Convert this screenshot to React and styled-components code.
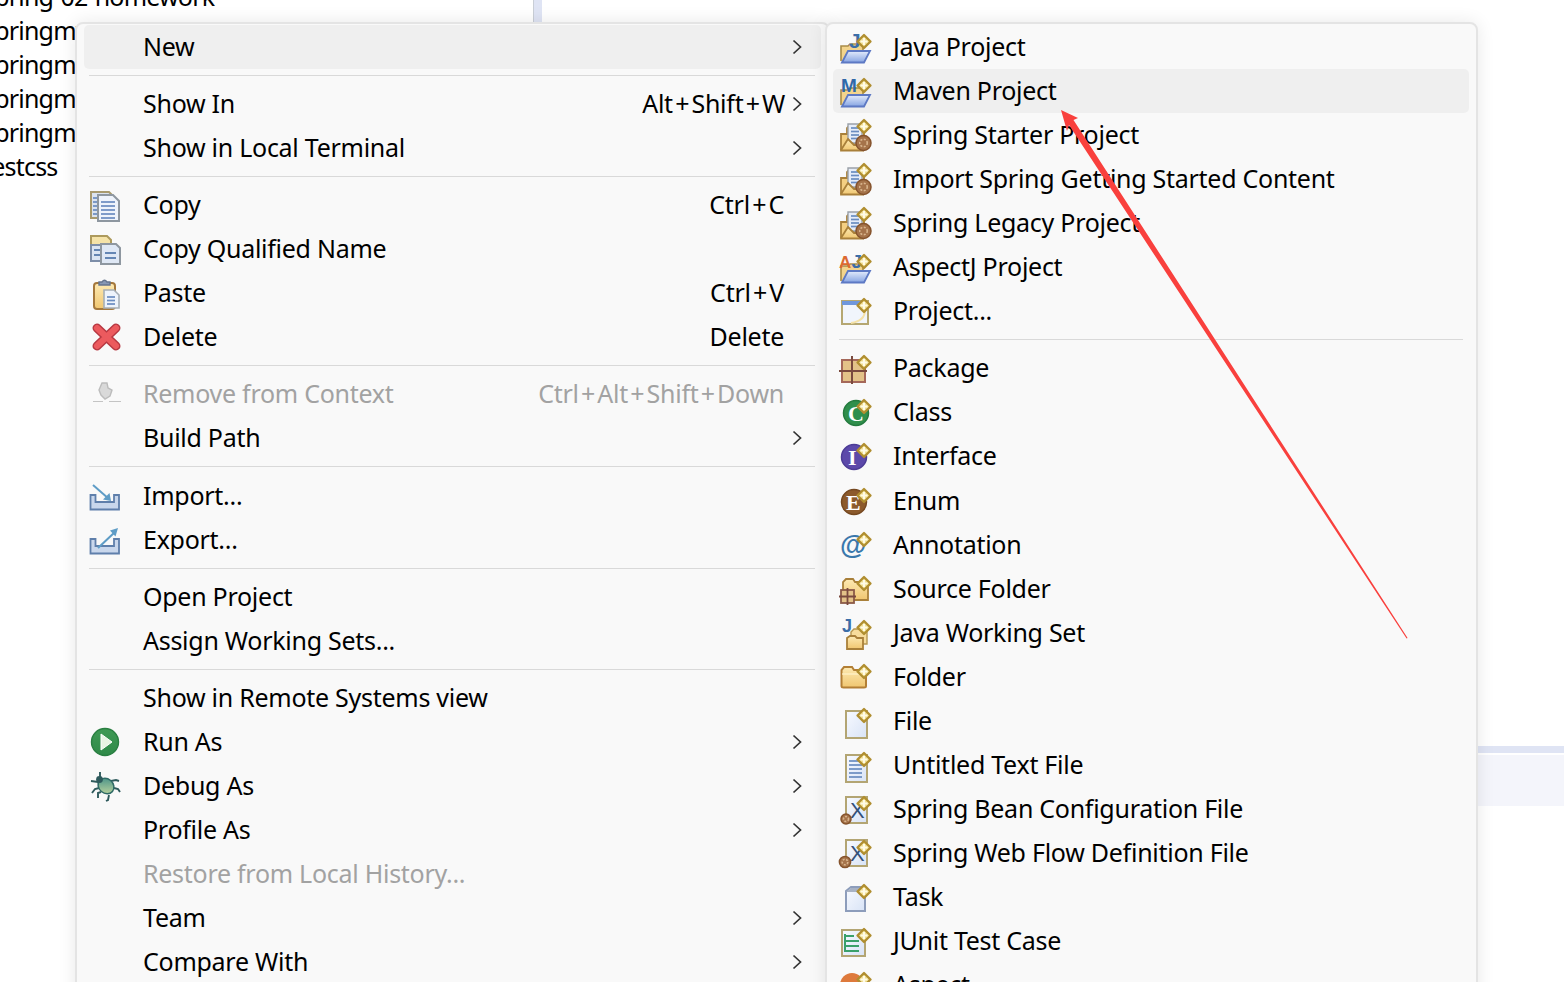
import React from 'react';
import styled, { createGlobalStyle } from 'styled-components';

const Global = createGlobalStyle`
  html, body { margin: 0; padding: 0; background: #fff; }
  #root { width: 1564px; height: 982px; overflow: hidden; }
`;

const Page = styled.div`
  position: relative;
  display: flex;
  width: 1564px;
  height: 982px;
  overflow: hidden;
  background: #fff;
  font-family: "Noto Sans", "Open Sans", sans-serif;
  color: #000;
`;
const TreePane = styled.div`
  width: 533px;
  flex: none;
  border-right: 1px solid #c9ced6;
  overflow: hidden;
  margin-top: -21px;
  height: 1003px;
`;
const TreeRow = styled.div`
  height: 34px;
  line-height: 34px;
  font-size: 25px;
  letter-spacing: -0.8px;
  margin-left: -17px;
  white-space: nowrap;
`;
const Sash = styled.div`
  width: 8px;
  flex: none;
  background: #dfe4f4;
`;
const Editor = styled.div`
  flex: 1;
  padding-top: 746px;
  display: flex;
  flex-direction: column;
  gap: 2px;
`;
const BandStrong = styled.div`height: 7px; background: #dfe4f4;`;
const BandSoft = styled.div`height: 51px; background: #f4f5fb;`;

const Row = styled.div`
  display: flex;
  align-items: center;
  height: 44px;
  margin-bottom: ${p => (p.$tall ? '1px' : '0')};
  border-radius: 5px;
  background: ${p => (p.$active ? '#efefef' : 'transparent')};
  color: ${p => (p.$disabled ? '#a2a2a2' : '#000')};
  font-size: 25px;
  letter-spacing: -0.27px;
  white-space: nowrap;
`;
const IconSlot = styled.span`
  width: 32px;
  height: 32px;
  flex: none;
  margin-left: 6px;
  margin-right: 22px;
  svg { display: block; }
`;
const Label = styled.span`
  flex: 1;
  padding-bottom: 2px;
`;
const Shortcut = styled.span`
  padding-bottom: 2px;
  margin-right: ${p => (p.$arrow ? '6px' : '37px')};
`;
const Plus = styled.span`
  margin: 0 2.3px;
`;
const ChevronSlot = styled.span`
  width: 12px;
  margin-right: 18px;
  display: flex;
  justify-content: center;
  svg { display: block; }
`;
const Separator = styled.div`
  height: 1px;
  margin: ${p => (p.$loose ? '6px 6px 7px' : '6px 6px 6px')};
  background: #d9d9d9;
`;
const Menu = styled.div`
  position: absolute;
  top: 22px;
  height: 1000px;
  box-sizing: border-box;
  background: #f9f9f9;
  border: 2px solid #e4e4e4;
  border-radius: 8px;
  padding-top: 1px;
  box-shadow: 0 0 18px rgba(0, 0, 0, 0.09);
`;
const MainMenu = styled(Menu)`
  left: 75px;
  width: 755px;
  padding-left: 7px;
  padding-right: 7px;
  ${IconSlot} { margin-left: 5px; }
  ${Separator} { margin-left: 5px; }
`;
const SubMenu = styled(Menu)`
  left: 825px;
  width: 653px;
  padding-left: 6px;
  padding-right: 7px;
`;
const ArrowLayer = styled.svg`
  position: absolute;
  left: 0;
  top: 0;
  pointer-events: none;
`;
const Defs = styled.svg`
  position: absolute;
  width: 0;
  height: 0;
`;

const Chevron = () => (
  <svg width="12" height="18" viewBox="0 0 12 18">
    <path d="M2.5 2.5 L9.5 9 L2.5 15.5" fill="none" stroke="#333" strokeWidth="1.7" />
  </svg>
);

const Star = ({ dy = 0 }) => (
  <g transform={`translate(0 ${dy})`}>
    <path d="M25 4 L31.5 10.5 L25 17 L18.5 10.5 Z" fill="#efdc8c" stroke="#b08e30" strokeWidth="2.3" strokeLinejoin="round" />
    <path d="M25 7v7M21.5 10.5h7" stroke="#fffbe6" strokeWidth="2.2" />
  </g>
);
const BlueFolder = () => (
  <g>
    <path d="M2 30 V15 H9 L11 13 H24 V20" fill="#f3d48c" stroke="#a98c48" strokeWidth="1.6" />
    <path d="M3 31.5 L9 20 H31 L25 31.5 Z" fill="url(#gBlue)" stroke="#5d79c4" strokeWidth="1.8" />
  </g>
);
const Glyph = ({ x, y, size, fill, children, weight = 700, family = '"Liberation Serif", serif' }) => (
  <text x={x} y={y} fontSize={size} fill={fill} fontWeight={weight} fontFamily={family} letterSpacing="0">{children}</text>
);
const Page1 = ({ x = 7, y = 6, w = 21, h = 27 }) => (
  <path d={`M${x} ${y} H${x + w} V${y + h} H${x} Z`} fill="url(#gPage)" stroke="#b3a573" strokeWidth="2" />
);
const Lines = ({ x, y, w, n, gap = 4, color = '#6a8cc0' }) => (
  <g stroke={color} strokeWidth="1.7">
    {Array.from({ length: n }, (_, i) => <path key={i} d={`M${x} ${y + i * gap}h${w}`} />)}
  </g>
);
const Nut = ({ cx = 25, cy = 26, r = 6.5 }) => (
  <g>
    <circle cx={cx} cy={cy} r={r} fill="#a5734a" stroke="#85532c" strokeWidth="1.5" />
    <circle cx={cx} cy={cy} r={r / 2} fill="none" stroke="#d8b48c" strokeWidth="1.6" strokeDasharray="2 1.5" />
  </g>
);
const SpringIcon = () => (
  <g>
    <path d="M2 31 V15 H8 V9 L11 6 H25 V24 H14" fill="#f4cf82" stroke="#a9803a" strokeWidth="1.8" />
    <path d="M9 5 H23 V24 H9 Z" fill="#e6edf9" stroke="#9aa0a8" strokeWidth="1.4" />
    <Lines x={12} y={9} w={8} n={4} gap={3.5} />
    <path d="M2 31 L9 20 L15 26 H24 V31.5 H2 Z" fill="url(#gFolder)" stroke="#a9803a" strokeWidth="1.8" />
    <Nut cx={24.5} cy={24} r={7.5} />
    <Star dy={-3} />
  </g>
);
const Circle = ({ color, ring, letter, fs = 22, x = 8, cx = 15 }) => (
  <g>
    <circle cx={cx} cy="17" r="12.5" fill={color} stroke={ring} strokeWidth="1.5" />
    <Glyph x={x} y={25} size={fs} fill="#fff">{letter}</Glyph>
    <Star />
  </g>
);
const Tray = () => (
  <path d="M1.5 15 V29.5 H30 V15 H25 V22 H6.5 V15 Z" fill="#c9d7ec" stroke="#5f7fab" strokeWidth="1.8" />
);
const Grid = ({ x, y, s }) => (
  <g>
    <rect x={x} y={y} width={s} height={s} fill="#e3c288" stroke="#8b5a48" strokeWidth="1.8" />
    <path d={`M${x - 2} ${y + s / 2}H${x + s + 2}M${x + s / 2} ${y - 2}V${y + s + 2}`} stroke="#7a4a3e" strokeWidth="1.8" />
  </g>
);

const icons = {
  copy: (
    <g>
      <path d="M2 3 H20 L24 7 V29 H2 Z" fill="#dbe3ef" stroke="#a89a6e" strokeWidth="2" />
      <Lines x={4} y={9} w={4} n={5} />
      <path d="M9 6 H24 L30 12 V32 H9 Z" fill="#eef3fb" stroke="#8e97a0" strokeWidth="2" />
      <Lines x={12} y={13} w={14} n={5} />
    </g>
  ),
  copyq: (
    <g>
      <path d="M2 3 H18 L22 7 V19 H2 Z" fill="#f5e3a8" stroke="#ad9a5c" strokeWidth="2" />
      <path d="M2 12 H18 V28 H2 Z" fill="#dbe5f3" stroke="#7d8ea8" strokeWidth="2" />
      <Lines x={5} y={17} w={9} n={2} gap={5} color="#4f74a8" />
      <path d="M12 11 H27 L31 15 V31 H12 Z" fill="#dfe8f5" stroke="#8e97a0" strokeWidth="2" />
      <Lines x={16} y={20} w={11} n={2} gap={5} color="#4f74a8" />
    </g>
  ),
  paste: (
    <g>
      <rect x="5" y="6" width="21" height="26" rx="3" fill="url(#gFolder)" stroke="#a5783c" strokeWidth="2" />
      <path d="M10 8 V5 H13 Q15.5 1.5 18 5 H21 V8 Z" fill="#8697b4" stroke="#64748f" strokeWidth="1.4" />
      <path d="M15 13 H25 L30 18 V31 H15 Z" fill="#eef3fb" stroke="#a6aeb6" strokeWidth="1.6" />
      <Lines x={18} y={20} w={8} n={3} gap={3.5} />
    </g>
  ),
  del: (
    <g strokeLinecap="round" fill="none">
      <path d="M8 7 L27 25 M27 7 L8 25" stroke="#b73842" strokeWidth="9" />
      <path d="M8 7 L27 25 M27 7 L8 25" stroke="#ec5a5e" strokeWidth="6" />
    </g>
  ),
  remove: (
    <g>
      <path d="M13 5 H18 L19 10 L23 12 L21 18 L16 21 L12 17 L10 12 Z" fill="#d9d9d9" stroke="#bcbcbc" strokeWidth="1.4" />
      <path d="M4 23.5 H14 M20 23.5 H32" stroke="#c4c4c4" strokeWidth="1.2" />
    </g>
  ),
  imp: (
    <g>
      <Tray />
      <path d="M4 5 L20 19" stroke="#5e9cc6" strokeWidth="2" fill="none" />
      <path d="M22 21 L14 19.5 L20.5 13 Z" fill="#5e9cc6" />
    </g>
  ),
  exp: (
    <g>
      <Tray />
      <path d="M9 24 L26 8" stroke="#5e9cc6" strokeWidth="2" fill="none" />
      <path d="M29 4 L21 6.5 L26.5 12.5 Z" fill="#5e9cc6" />
    </g>
  ),
  run: (
    <g>
      <circle cx="16" cy="16" r="13.5" fill="url(#gGreen)" stroke="#2a7f42" strokeWidth="1.4" />
      <path d="M12 8 L23 16 L12 24 Z" fill="#e9f5e4" stroke="#fff" strokeWidth="1" />
    </g>
  ),
  bug: (
    <g>
      <g stroke="#2e5a5c" strokeWidth="1.9" fill="none">
        <path d="M11 2 V9 M2 11 L9 12 L12 11 M22 11 L27 10 L30 11 M3 23 L6 19 L10 18 M25 18 L29 19 L31 22 M9 28 L9 23 L12 22 M20 25 L19 30 L17 31" />
      </g>
      <ellipse cx="17" cy="16" rx="8.4" ry="7.2" transform="rotate(40 17 16)" fill="url(#gBug)" stroke="#2f6a66" strokeWidth="1.5" />
      <circle cx="10.5" cy="9.5" r="3.4" fill="#2e5a5c" />
    </g>
  ),
  java: (
    <g>
      <BlueFolder />
      <Glyph x={10} y={17} size={21} fill="#3c6ea8" family='"Liberation Sans", sans-serif'>J</Glyph>
      <Star />
    </g>
  ),
  maven: (
    <g>
      <BlueFolder />
      <Glyph x={2} y={17} size={19} fill="#2f68a8" family='"Liberation Sans", sans-serif'>M</Glyph>
      <Star />
    </g>
  ),
  spring: <SpringIcon />,
  aspectj: (
    <g>
      <BlueFolder />
      <Glyph x={0} y={17} size={17} fill="#dc6a30" family='"Liberation Sans", sans-serif'>A</Glyph>
      <Glyph x={12.5} y={17} size={19} fill="#3c6ea8" family='"Liberation Sans", sans-serif'>J</Glyph>
      <Star />
    </g>
  ),
  project: (
    <g>
      <rect x="3" y="6" width="26" height="23" fill="#f1f5fc" stroke="#b5a772" strokeWidth="2" />
      <path d="M3 6 H24 V10 H3 Z" fill="#6f97dc" />
      <path d="M26 15 Q26 26 12 28" stroke="#f5e2a8" strokeWidth="2" fill="none" />
      <Star />
    </g>
  ),
  pack: (
    <g>
      <rect x="3" y="8" width="23" height="22" fill="#e3c288" stroke="#a5685a" strokeWidth="2" />
      <path d="M0 19 H28 M13 4 V32" stroke="#7a4a3e" strokeWidth="2" />
      <Star />
    </g>
  ),
  cls: <Circle color="#2f8f4c" ring="#247a3e" letter="C" x={9} cx={17} />,
  iface: <Circle color="#5c49aa" ring="#4c3c96" letter="I" x={9} />,
  enumm: <Circle color="#8c5a2c" ring="#754820" letter="E" x={7} />,
  anno: (
    <g>
      <Glyph x={1} y={25} size={27} fill="#3a78ac" family='"Liberation Sans", sans-serif'>@</Glyph>
      <Star />
    </g>
  ),
  source: (
    <g>
      <path d="M4 27 V9 L7 6 H14 L16 9 H29 V27 Z" fill="url(#gFolder)" stroke="#a9803a" strokeWidth="1.8" />
      <Grid x={2} y={17} s={13} />
      <Star />
    </g>
  ),
  jset: (
    <g>
      <Glyph x={3} y={15} size={18} fill="#3c6ea8" family='"Liberation Sans", sans-serif'>J</Glyph>
      <path d="M12 23 V15 L15 12 H28 V27 H20" fill="#f7dc9c" stroke="#b59650" strokeWidth="1.4" />
      <path d="M8 32 V21 L11 19 H16 L18 21 H24 V32 Z" fill="url(#gFolder)" stroke="#a9803a" strokeWidth="1.8" />
      <Star />
    </g>
  ),
  folder: (
    <g>
      <path d="M2.5 25 V9 L5 6 H13 L15 9 H27 V25 Q27 26.5 25 26.5 H4.5 Q2.5 26.5 2.5 25 Z" fill="url(#gFolder)" stroke="#b37f35" strokeWidth="2" />
      <path d="M3 13 H26" stroke="#fff3cc" strokeWidth="1.2" />
      <Star />
    </g>
  ),
  file: (
    <g>
      <Page1 x={7} y={6} w={21} h={27} />
      <Star />
    </g>
  ),
  text: (
    <g>
      <Page1 x={7} y={6} w={21} h={27} />
      <Lines x={10} y={12} w={13} n={5} />
      <Star />
    </g>
  ),
  bean: (
    <g>
      <Page1 x={7} y={4} w={21} h={26} />
      <Glyph x={11} y={25} size={22} fill="#33507a" family='"Liberation Sans", sans-serif' weight={400}>X</Glyph>
      <Nut cx={7} cy={26} r={5} />
      <Star />
    </g>
  ),
  web: (
    <g>
      <Page1 x={7} y={3} w={21} h={26} />
      <Glyph x={11} y={24} size={22} fill="#33507a" family='"Liberation Sans", sans-serif' weight={400}>X</Glyph>
      <Nut cx={6} cy={25} r={5.6} />
      <Star />
    </g>
  ),
  task: (
    <g>
      <path d="M7 10 L12 6 H26 V30 H7 Z" fill="url(#gPage)" stroke="#8d9dbb" strokeWidth="2" />
      <path d="M7 11 L12 7 H24 L21 11 Z" fill="#a8b2c4" />
      <Star />
    </g>
  ),
  junit: (
    <g>
      <Page1 x={3} y={5} w={23} h={26} />
      <g stroke="#3aa06a" strokeWidth="2">
        <path d="M6 9 V27 M6 11 H15 M6 16 H20 M6 21 H20 M6 26 H20" />
      </g>
      <Star />
    </g>
  ),
  aspect: (
    <g>
      <circle cx="13" cy="16" r="12" fill="#de7a3c" />
      <Star />
    </g>
  ),
};

const Icon = ({ name }) => (
  <IconSlot>
    {name && (
      <svg width="32" height="32" viewBox="0 0 32 32" overflow="visible">
        {icons[name]}
      </svg>
    )}
  </IconSlot>
);

const ShortcutText = ({ text }) =>
  text.split('+').map((part, i) => (
    <React.Fragment key={i}>
      {i > 0 && <Plus>+</Plus>}
      {part}
    </React.Fragment>
  ));

const Item = ({ icon, label, shortcut, arrow, active, disabled, tall }) => (
  <Row $active={active} $disabled={disabled} $tall={tall}>
    <Icon name={icon} />
    <Label>{label}</Label>
    {shortcut && <Shortcut $arrow={arrow}><ShortcutText text={shortcut} /></Shortcut>}
    {arrow && <ChevronSlot><Chevron /></ChevronSlot>}
  </Row>
);

const mainGroups = [
  { items: [{ label: 'New', arrow: true, active: true }] },
  { items: [
    { label: 'Show In', shortcut: 'Alt+Shift+W', arrow: true },
    { label: 'Show in Local Terminal', arrow: true },
  ] },
  { items: [
    { icon: 'copy', label: 'Copy', shortcut: 'Ctrl+C' },
    { icon: 'copyq', label: 'Copy Qualified Name' },
    { icon: 'paste', label: 'Paste', shortcut: 'Ctrl+V' },
    { icon: 'del', label: 'Delete', shortcut: 'Delete' },
  ] },
  { items: [
    { icon: 'remove', label: 'Remove from Context', shortcut: 'Ctrl+Alt+Shift+Down', disabled: true },
    { label: 'Build Path', arrow: true },
  ] },
  { loose: true, items: [
    { icon: 'imp', label: 'Import...' },
    { icon: 'exp', label: 'Export...' },
  ] },
  { items: [
    { label: 'Open Project' },
    { label: 'Assign Working Sets...' },
  ] },
  { items: [
    { label: 'Show in Remote Systems view' },
    { icon: 'run', label: 'Run As', arrow: true },
    { icon: 'bug', label: 'Debug As', arrow: true },
    { label: 'Profile As', arrow: true },
    { label: 'Restore from Local History...', disabled: true },
    { label: 'Team', arrow: true },
    { label: 'Compare With', arrow: true },
  ] },
];

const subGroups = [
  { items: [
    { icon: 'java', label: 'Java Project' },
    { icon: 'maven', label: 'Maven Project', active: true },
    { icon: 'spring', label: 'Spring Starter Project' },
    { icon: 'spring', label: 'Import Spring Getting Started Content' },
    { icon: 'spring', label: 'Spring Legacy Project' },
    { icon: 'aspectj', label: 'AspectJ Project' },
    { icon: 'project', label: 'Project...' },
  ] },
  { items: [
    { icon: 'pack', label: 'Package' },
    { icon: 'cls', label: 'Class' },
    { icon: 'iface', label: 'Interface', tall: true },
    { icon: 'enumm', label: 'Enum' },
    { icon: 'anno', label: 'Annotation' },
    { icon: 'source', label: 'Source Folder' },
    { icon: 'jset', label: 'Java Working Set' },
    { icon: 'folder', label: 'Folder' },
    { icon: 'file', label: 'File' },
    { icon: 'text', label: 'Untitled Text File' },
    { icon: 'bean', label: 'Spring Bean Configuration File' },
    { icon: 'web', label: 'Spring Web Flow Definition File' },
    { icon: 'task', label: 'Task' },
    { icon: 'junit', label: 'JUnit Test Case' },
    { icon: 'aspect', label: 'Aspect' },
  ] },
];

const Groups = ({ groups }) =>
  groups.map((group, g) => (
    <React.Fragment key={g}>
      {g > 0 && <Separator $loose={group.loose} />}
      {group.items.map(item => <Item key={item.label + item.icon} {...item} />)}
    </React.Fragment>
  ));

const tree = ['spring-02-homework', 'springmvc-01', 'springmvc-02', 'springmvc-03', 'springmvc-04', 'testcss'];

export default function App() {
  return (
    <Page>
      <Global />
      <Defs aria-hidden="true">
        <defs>
          <linearGradient id="gBlue" x1="0" y1="0" x2="0" y2="1">
            <stop offset="0" stopColor="#e4ecfc" />
            <stop offset="1" stopColor="#86a4e2" />
          </linearGradient>
          <linearGradient id="gFolder" x1="0" y1="0" x2="0" y2="1">
            <stop offset="0" stopColor="#fdeab4" />
            <stop offset="1" stopColor="#f0c670" />
          </linearGradient>
          <linearGradient id="gPage" x1="0" y1="0" x2="1" y2="1">
            <stop offset="0" stopColor="#f8faff" />
            <stop offset="1" stopColor="#d8e3f6" />
          </linearGradient>
          <linearGradient id="gGreen" x1="0" y1="0" x2="0" y2="1">
            <stop offset="0" stopColor="#3f9a55" />
            <stop offset="1" stopColor="#2f8a48" />
          </linearGradient>
          <linearGradient id="gBug" x1="0" y1="0" x2="1" y2="1">
            <stop offset="0" stopColor="#3b8a86" />
            <stop offset="1" stopColor="#c9dca0" />
          </linearGradient>
        </defs>
      </Defs>
      <TreePane>
        {tree.map(t => <TreeRow key={t}>{t}</TreeRow>)}
      </TreePane>
      <Sash />
      <Editor>
        <BandStrong />
        <BandSoft />
      </Editor>
      <MainMenu><Groups groups={mainGroups} /></MainMenu>
      <SubMenu><Groups groups={subGroups} /></SubMenu>
      <ArrowLayer width="1564" height="982" viewBox="0 0 1564 982">
        <path d="M1061 110 L1078 118 L1073.5 120 L1407.6 638 L1406.6 638.6 L1069 125 L1067 131 Z" fill="#f9403d" />
      </ArrowLayer>
    </Page>
  );
}
